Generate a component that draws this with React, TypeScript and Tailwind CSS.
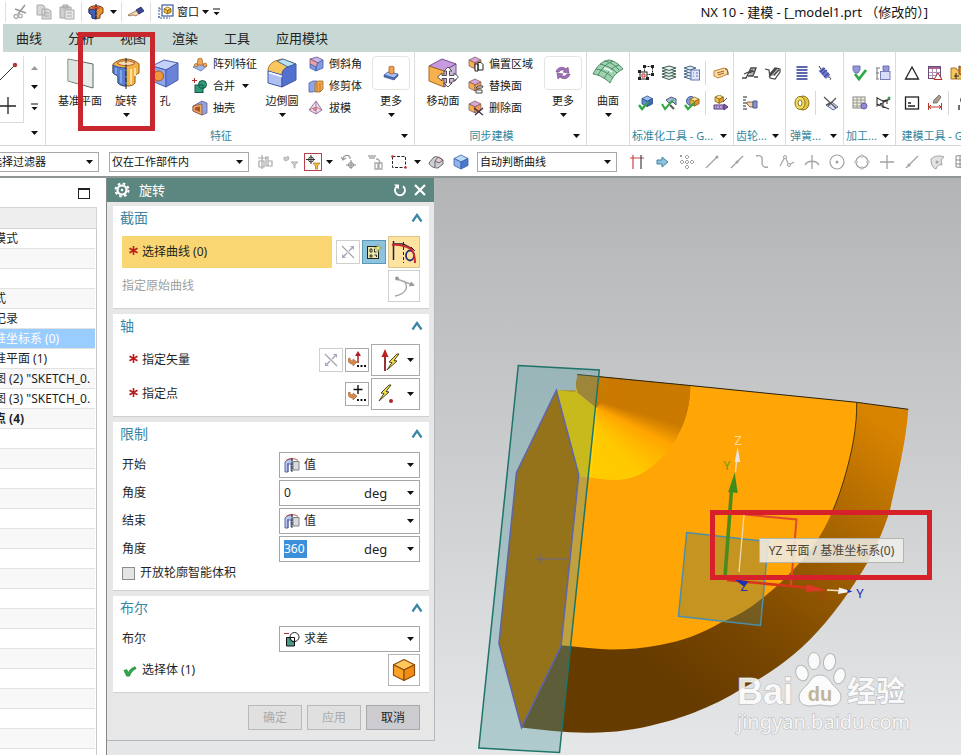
import type { ReactNode } from "react";

/* ---------- small drawing helpers ---------- */

type IconProps = { children: ReactNode; size?: string; box?: string };

function Icon({ children, size = "size-4", box = "0 0 16 16" }: IconProps) {
  return (
    <svg viewBox={box} className={`${size} shrink-0`} fill="none" aria-hidden="true">
      {children}
    </svg>
  );
}

function Caret({ className = "text-[#111]" }: { className?: string }) {
  return (
    <svg viewBox="0 0 7 4" className={`h-1 w-[7px] shrink-0 ${className}`} aria-hidden="true">
      <path d="M0 0h7L3.500 4z" fill="currentColor" />
    </svg>
  );
}

function BarCaret() {
  return (
    <svg viewBox="0 0 7 8" className="h-2 w-[7px] shrink-0" aria-hidden="true">
      <path d="M0 0.5h7v1h-7zM0.5 4h6L3.5 7.2z" fill="#111" />
    </svg>
  );
}

function Block({ top, left, right, edge, x = 1, y = 1, s = 1 }: { top: string; left: string; right: string; edge: string; x?: number; y?: number; s?: number }) {
  return (
    <g transform={`translate(${x} ${y}) scale(${s})`} stroke={edge} strokeWidth={0.8 / s} strokeLinejoin="round">
      <path d="M0 3.500L7 0l7 3.500L7 7z" fill={top} />
      <path d="M0 3.500L7 7v7L0 10.500z" fill={left} />
      <path d="M7 7l7-3.500v7L7 14z" fill={right} />
    </g>
  );
}

/* ---------- ribbon drawings ---------- */

const datumPlane = (
  <Icon size="size-8" box="0 0 32 32">
    <path d="M4 2l25 5v24L4 24z" fill="#e6ece8" stroke="#5d6b66" />
    <path d="M4 2l12 3v22L4 24z" fill="#d3dfd8" opacity=".6" />
  </Icon>
);

const revolve = (
  <Icon size="size-8" box="0 0 32 32">
    <path d="M3 7c3-3 8-5 13-5s10 2 13 5v9c-2 1-4 2-4 4v6c-2 3-5 3-9 3s-6-1-8-3v-6c0-2-3-2-5-4z" fill="#f3b244" stroke="#8d5a1e" />
    <path d="M3 8c3 2 8 3 13 3v18c-3 0-6-1-8-3v-6c0-2-3-2-5-4z" fill="#5b7fd0" stroke="#36508f" />
    <path d="M7 6c4-3 13-3 18 0-2 3-14 4-18 0z" fill="#f7d9a8" stroke="#b25f3c" />
    <path d="M21 12v15M25 11v8" stroke="#fbe0a0" strokeWidth="2" />
    <path d="M6 11v6M11 13v13" stroke="#8fb0ee" strokeWidth="1.500" />
    <path d="M16 1v31" stroke="#222" strokeDasharray="5 1.500" />
  </Icon>
);

const hole = (
  <Icon size="size-8" box="0 0 32 32">
    <path d="M3 9l12-6 14 3-12 7z" fill="#c3d2fa" stroke="#4a5fa8" />
    <path d="M3 9l14 4v17L3 24z" fill="#8ea6ee" stroke="#4a5fa8" />
    <path d="M17 13l12-7v17l-12 7z" fill="#6a83d8" stroke="#4a5fa8" />
    <circle cx="9.500" cy="19" r="5" fill="#f0963c" stroke="#a75718" />
  </Icon>
);

const edgeBlend = (
  <Icon size="size-8" box="0 0 32 32">
    <path d="M2 14c0-5 3-8 7-10l7-2 14 5-9 4c-4 1-5 4-5 8z" fill="#f7c65c" stroke="#a8742a" />
    <path d="M11 4l6-2 13 5-8 3z" fill="#b7e0f0" stroke="#4a6d9a" />
    <path d="M2 14l14 4v12L2 26z" fill="#aebff4" stroke="#3f5aa8" />
    <path d="M16 18c0-4 2-6 5-8l9-3v16l-14 7z" fill="#5470cf" stroke="#3f5aa8" />
    <path d="M3 15.500l13 4" stroke="#fff" strokeWidth="1.500" />
  </Icon>
);

const moveFace = (
  <Icon size="size-8" box="0 0 32 32">
    <path d="M2 9l13-7 14 5-12 7z" fill="#c79ae0" stroke="#74508c" />
    <path d="M2 9l15 5v16L2 24z" fill="#f8b14c" stroke="#a36a26" />
    <path d="M17 14l12-7v16l-12 7z" fill="#c9b4dc" stroke="#74508c" />
    <path d="M21 10l4 4h-2.500v4.500H27V16l4.500 4-4.500 4v-2.500h-4.500V26H25l-4 4-4-4h2.500v-4.500H15V24l-4.500-4 4.500-4v2.500h4.500V14H17z" fill="#fff" stroke="#444" strokeWidth=".9" />
  </Icon>
);

const surface = (
  <Icon size="size-8" box="0 0 32 32">
    <path d="M1 17C5 9 10 4 17 3c6 1 11 5 14 9-6 3-10 7-13 14C14 22 8 18 1 17z" fill="#9fd3b0" stroke="#4a8a66" />
    <path d="M4 12c7 1 13 5 17 9M8 7c8 2 13 5 17 9M12 4c6 1 11 4 15 9M6 18C10 11 15 6 21 4M12 22c4-8 9-12 15-14" stroke="#4a8a66" />
    <path d="M12 11c4 1 6 2 8 4" stroke="#e3f6e8" strokeWidth="2" />
  </Icon>
);

const patternFeature = (
  <Icon>
    <path d="M1 11l5-3 9 2-6 5z" fill="#9fb6ea" stroke="#5b74b8" strokeWidth=".8" />
    <path d="M6 3c1-1 4-1 4 0l1 6H5z" fill="#f3a858" stroke="#a8652a" strokeWidth=".8" />
    <path d="M2 9l2-2 2 3-2 1zM11 8l3-1 1 3-3 1z" fill="#f3a858" stroke="#a8652a" strokeWidth=".7" />
  </Icon>
);
const unite = (
  <Icon>
    <rect x="3" y="7" width="8" height="7.500" fill="#2f9a7c" stroke="#155843" />
    <circle cx="10.500" cy="6.500" r="4" fill="#2f9a7c" stroke="#155843" />
    <path d="M7 7h4v4" stroke="#155843" />
    <path d="M2.500 0v5M0 2.500h5" stroke="#b03030" />
  </Icon>
);
const shell = (
  <Icon>
    <path d="M1 6l9-5 5 2v10l-5 2-9-4z" fill="#8fa4e4" stroke="#6b5b80" strokeWidth=".8" />
    <path d="M1 6l9-2v11l-9-4z" fill="#f2a45c" stroke="#8c5a3c" strokeWidth=".8" />
    <path d="M3 7.500l5-1v5.500l-5-2z" fill="#a2542c" />
  </Icon>
);
const chamfer = (
  <Icon>
    <path d="M2 3l7-2 6 3-5 3z" fill="#c7b6e8" stroke="#5d568c" strokeWidth=".8" />
    <path d="M2 3l8 4-2 4-6-3z" fill="#e8a3a8" stroke="#8c5664" strokeWidth=".8" />
    <path d="M2 8l6 3v4l-6-3zM8 11l2-4 5-3v8l-7 3z" fill="#7f9be4" stroke="#4a5fa8" strokeWidth=".8" />
  </Icon>
);
const trimBody = (
  <Icon>
    <path d="M1 5l4-2h4v9l-4 2H1z" fill="#8da6ea" stroke="#4a5fa8" strokeWidth=".8" />
    <path d="M7 5l3-2h5v8l-3 3H7z" fill="#f3a84c" stroke="#a3652a" strokeWidth=".8" />
    <path d="M9 5v9M12 5v9" stroke="#a3652a" strokeWidth=".7" />
  </Icon>
);
const draft = (
  <Icon>
    <path d="M8 1l6 9-6 4-7-4z" fill="#eadcf0" stroke="#7c5c8c" strokeWidth=".8" />
    <path d="M8 1v13M1 10l7-3 6 3" stroke="#a86a7c" strokeWidth=".8" />
    <circle cx="7" cy="9" r="2" fill="#d77a8a" />
  </Icon>
);
const moreFeature = (
  <Icon>
    <path d="M1 10l4-3 10 2-4 4z" fill="#a9c0f0" stroke="#3f5c9c" strokeWidth=".8" />
    <path d="M1 10l10 3v2L1 12zM11 13l4-4v2l-4 4z" fill="#4a6cba" stroke="#3f5c9c" strokeWidth=".6" />
    <path d="M6 2c1-1 4-1 5 0v6c-1 1-4 1-5 0z" fill="#f3a24c" stroke="#a3622a" strokeWidth=".8" />
  </Icon>
);
const moreSync = (
  <Icon>
    <path d="M1 7c1-5 7-6 10-3l2-2 1 6-6-1 2-1C8 4 5 5 4 7zM15 9c-1 5-7 6-10 3l-2 2-1-6 6 1-2 1c2 2 5 1 6-1z" fill="#a070b8" stroke="#6d4685" strokeWidth=".6" />
  </Icon>
);
const syncBase = <Block top="#d9a6dc" left="#f8b04e" right="#f29a55" edge="#84605c" s={0.85} />;
const offsetRegion = (
  <Icon>
    {syncBase}
    <path d="M7 8h3v7H7zM10 6.500h3l2 2V14h-5z" fill="#fff" stroke="#222" />
  </Icon>
);
const replaceFace = (
  <Icon>
    {syncBase}
    <path d="M8 10l2-2h5l-1 2zM8 15v-3h6v3z" fill="#fff" stroke="#444" />
  </Icon>
);
const deleteFace = (
  <Icon>
    {syncBase}
    <path d="M6 8l9 7M15 8l-8 7" stroke="#3a2c4c" strokeWidth="1.300" />
  </Icon>
);

const stdIcons = {
  group: (
    <Icon>
      <rect x="6.500" y="1.500" width="8" height="8" stroke="#222" strokeDasharray="2 1" />
      <rect x="2" y="7" width="7" height="7" fill="#fff" stroke="#222" />
      <path d="M5 0h3v3H5zM13 0h3v3h-3zM13 8h3v3h-3zM0 5h3v3H0zM0 12h3v3H0zM8 12h3v3H8z" fill="#222" />
      <path d="M4 9h3v3H4z" stroke="#c33" fill="#fdd" />
    </Icon>
  ),
  layers: (
    <Icon>
      {[10, 7, 4, 1].map((y) => (
        <path key={y} d={`M1 ${y + 2}l7-2 7 2-7 2.500z`} fill="#e4f1ea" stroke="#3d5a50" />
      ))}
    </Icon>
  ),
  layerSet: (
    <Icon>
      {[9, 6, 3, 0].map((y) => (
        <path key={y} d={`M0 ${y + 3}l6-2 6 2-6 2z`} fill="#dfe9ee" stroke="#4a6a88" />
      ))}
      <rect x="7" y="5" width="8.500" height="10" fill="#dfe6fb" stroke="#6274b8" />
      <path d="M9 8h1M12 8h2M9 11h1M12 11h2" stroke="#6274b8" />
    </Icon>
  ),
  tag: (
    <Icon>
      <path d="M1 6l10-3 3 1 1 5-10 4-4-2z" fill="#fbdca0" stroke="#c28438" />
      <path d="M4 8l7-2M5 10l6-2" stroke="#a3622a" />
      <path d="M12 4c3 0 3 3 3 6" stroke="#555" />
    </Icon>
  ),
  blueCheck: (
    <Icon>
      <Block top="#9fc0f2" left="#5f8ad8" right="#3f68b8" edge="#2c4a88" x={4} y={1} s={0.75} />
      <path d="M1 10l3 4 6-7" stroke="#35a845" strokeWidth="2.400" />
    </Icon>
  ),
  inspect: (
    <Icon>
      <path d="M5 5l5-3 5 2v6l-3-3-4 1z" fill="#a9b8d8" stroke="#4b5a80" />
      <path d="M1 9l3 5 8-9" stroke="#35a845" strokeWidth="2" />
      <path d="M9 10l4 4" stroke="#555" strokeWidth="2" />
    </Icon>
  ),
  solidCheck: (
    <Icon>
      <circle cx="7" cy="6" r="4.500" fill="#7f9be4" stroke="#3f5c9c" />
      <Block top="#fbe08a" left="#f0b83c" right="#d8962a" edge="#8c6420" x={6} y={2} s={0.65} />
      <path d="M1 10l3 4 6-6" stroke="#35a845" strokeWidth="2.200" />
    </Icon>
  ),
  pack: (
    <Icon>
      <Block top="#fbe08a" left="#f4c648" right="#dca030" edge="#8c6420" x={2} y={0} s={0.6} />
      <path d="M1 10h10v4H1z" fill="#b9a3d8" stroke="#55397c" />
      <path d="M11 9l4 3-4 3zM3 12h1M6 12h1M9 12h1" stroke="#55397c" fill="#8c5cb0" />
      <path d="M10 7l4-4" stroke="#555" />
    </Icon>
  ),
  gearA: (
    <Icon>
      <path d="M9 4h4l-2 7H7z" fill="#b8b8b8" />
      <path d="M0 13h4l5-10h5l-3 8H6M2 9l9-4M7 8l5-2M12 12h4" stroke="#444" strokeWidth="1.300" />
    </Icon>
  ),
  gearB: (
    <Icon>
      <path d="M9 4h5l-4 7H6z" fill="#b0b0b0" />
      <path d="M0 4l4 1 1 8 5 1 5-7V4l-5-1-5 6M4 12l8-9M9 10l5-5" stroke="#444" strokeWidth="1.200" />
    </Icon>
  ),
  hand: (
    <Icon>
      <path d="M1 2h4M1 5h3M1 8h4M1 11h3M1 14h4" stroke="#222" />
      <path d="M5 7h6v5H8L5 9z" fill="#f0cfae" stroke="#8c6a4c" />
      <path d="M11 6h4v7h-4z" fill="#8a93cc" stroke="#4c5694" />
    </Icon>
  ),
  spring: (
    <Icon>
      {[2, 5, 8, 11, 14].map((y) => (
        <path key={y} d={`M2.500 ${y}h11`} stroke="#5560a8" strokeWidth="1.900" />
      ))}
    </Icon>
  ),
  springDiag: (
    <Icon>
      <path d="M4 4l7 8" stroke="#6b76cc" strokeWidth="6" />
      <path d="M3 7l5-4M5 9l5-4M7 12l5-4" stroke="#333c80" />
      <path d="M2 1l2 3M11 12c3 0 3 2 2 3" stroke="#333" />
    </Icon>
  ),
  disc: (
    <Icon>
      <ellipse cx="9" cy="8" rx="6" ry="7" fill="#e3c53c" stroke="#8a741a" />
      <ellipse cx="6" cy="8" rx="5" ry="6.500" fill="#f4dd66" stroke="#8a741a" />
      <ellipse cx="6" cy="8" rx="2" ry="3" fill="#fff" stroke="#8a741a" />
    </Icon>
  ),
  springDel: (
    <Icon>
      <path d="M3 10l6-3 6 5-5 3z" fill="#d8def0" stroke="#5c6a9c" />
      <path d="M1 2l12 11M13 3L5 11M3 10l6-3" stroke="#555" strokeWidth="1.200" />
    </Icon>
  ),
  processCheck: (
    <Icon>
      <path d="M1 1h7v4L6 8H3L1 5z" fill="#9298d8" stroke="#6a70b0" />
      <path d="M3 9l4 5 7-9" stroke="#2fa84a" strokeWidth="2.800" />
    </Icon>
  ),
  processDoc: (
    <Icon>
      <path d="M8 1h6v4l-2 2h-2L8 5z" fill="#9298d8" stroke="#6a70b0" />
      <rect x="5.500" y="6.500" width="9.500" height="8" fill="#d8dcf4" stroke="#7780b8" />
      <path d="M2 3v11M1 3h4M1 8h3M1 14h3" stroke="#777" />
    </Icon>
  ),
  tableGear: (
    <Icon>
      <rect x="1" y="2" width="12" height="11" fill="#f5f3de" stroke="#888" />
      <path d="M1 5h12M1 8h12M1 11h12M5 2v11M9 2v11" stroke="#999" />
      <circle cx="12" cy="11" r="3" fill="#8f8cd4" stroke="#6560ac" />
    </Icon>
  ),
  axisTool: (
    <Icon>
      <path d="M2 2v9l5-2M2 3l6 3v7M2 9l12 5M5 9l10-5M7 6l5-1v4" stroke="#333" strokeWidth="1.100" />
      <circle cx="14" cy="3" r="1.500" fill="#3c9a5c" />
    </Icon>
  ),
  triangle: (
    <Icon>
      <path d="M8 2l6.500 12h-13z" stroke="#222" strokeWidth="1.300" />
    </Icon>
  ),
  tableTri: (
    <Icon>
      <rect x="1.500" y="1.500" width="12" height="12" fill="#fff" stroke="#6b4a7a" />
      <path d="M2 2h11v2H2z" fill="#a86090" />
      <path d="M2 7.500h11M2 10.500h11M5.500 4v9M9.500 4v9" stroke="#a893b4" />
      <path d="M11 8l4 6.500H7z" fill="#fff" stroke="#b03030" />
    </Icon>
  ),
  folder: (
    <Icon>
      <path d="M1 3h5l1 2h8v9H1z" fill="#f6c65c" stroke="#a8742a" />
      <path d="M9 1l6 3v7l-6-2z" fill="#d88a3c" stroke="#7a4a1a" />
      <path d="M6 8v6M4 11h5" stroke="#222" />
    </Icon>
  ),
  note: (
    <Icon>
      <rect x="1.500" y="2" width="13" height="12" fill="#fff" stroke="#222" strokeWidth="1.300" />
      <path d="M4 8h3M4 11h7" stroke="#222" strokeWidth="1.300" />
    </Icon>
  ),
  dimension: (
    <Icon>
      <path d="M7 5l5-5 2 2-4 6H6z" fill="#a8a08c" stroke="#666" strokeWidth=".8" />
      <path d="M1.500 8v7M14.500 8v7M2 12h12M4 10l-2 2 2 2M12 10l2 2-2 2" stroke="#c03a2c" />
    </Icon>
  ),
  numbered: (
    <Icon>
      <circle cx="8" cy="5" r="3.500" fill="#a8acc0" stroke="#555" />
      <path d="M3 10v5M6 10h4v5H6zM13 10v5" stroke="#222" strokeWidth="1.300" />
    </Icon>
  ),
};

/* ---------- ribbon pieces ---------- */

function BigTool({ icon, label, width, menu = false }: { icon: ReactNode; label: string; width: string; menu?: boolean }) {
  return (
    <button type="button" className={`flex shrink-0 flex-col items-center pt-[5px] ${width}`}>
      {icon}
      <span className="mt-[5px] h-[14px] leading-[14px] whitespace-nowrap">{label}</span>
      {menu && <span className="mt-[5px]"><Caret /></span>}
    </button>
  );
}

function MoreTool({ icon }: { icon: ReactNode }) {
  return (
    <button type="button" className="flex w-[38px] shrink-0 flex-col items-center pt-1">
      <span className="flex h-[34px] w-full items-center justify-center rounded-sm border border-[#e4e4e4]">{icon}</span>
      <span className="mt-1 h-[14px] leading-[14px]">更多</span>
      <span className="mt-[5px]"><Caret /></span>
    </button>
  );
}

function ToolList({ items, className }: { items: { icon: ReactNode; label: string; menu?: boolean }[]; className: string }) {
  return (
    <div className={`flex shrink-0 flex-col pt-px ${className}`}>
      {items.map((it) => (
        <button key={it.label} type="button" className="flex h-[22px] items-center gap-[5px] whitespace-nowrap">
          {it.icon}
          <span>{it.label}</span>
          {it.menu && <span className="ml-0.5"><Caret /></span>}
        </button>
      ))}
    </div>
  );
}

function Group({ label, width, children, menu = true }: { label?: string; width: string; children: ReactNode; menu?: boolean }) {
  return (
    <section aria-label={label} className={`flex shrink-0 flex-col border-r border-[#dcdcdc] ${width}`}>
      <div className="flex h-[76px]">{children}</div>
      <div className="flex h-4 items-center pl-0.5 text-[#2f87a0]">
        <span className="flex-1 text-center whitespace-nowrap">{label}</span>
        {menu && <button type="button" aria-label="选项" className="flex w-5 justify-center"><Caret /></button>}
      </div>
    </section>
  );
}

function IconRows({ rows }: { rows: { name: string; icon: ReactNode; split?: boolean }[][] }) {
  return (
    <div className="flex flex-col pt-[6px] pl-1">
      {rows.map((row, i) => (
        <div key={i} className="flex h-[30px] items-center">
          {row.map((c) => (
            <div key={c.name} className="flex items-center">
              {c.split && <span className="mr-[3px] ml-0.5 h-6 w-px bg-[#d8d8d8]" />}
              <button type="button" aria-label={c.name} className="flex w-[23px] justify-center">{c.icon}</button>
            </div>
          ))}
        </div>
      ))}
    </div>
  );
}

function TitleBar() {
  const sep = "h-5 w-px bg-[#dedede]";
  return (
    <header className="flex h-6 shrink-0 items-center overflow-hidden bg-white">
      <div className="flex shrink-0 items-center pl-[5px] text-[11px]">
        <span className={sep} />
        <button type="button" aria-label="剪切" className="ml-1.5">
          <Icon><path d="M13 1L6 10M3 5l11 4" stroke="#999" strokeWidth="1.600" /><circle cx="4" cy="12.500" r="2" stroke="#aaa" strokeWidth="1.300" /><circle cx="8.500" cy="12" r="1.800" stroke="#aaa" strokeWidth="1.300" /></Icon>
        </button>
        <button type="button" aria-label="复制" className="ml-2">
          <Icon><path d="M1 1h6l2 2v8H1zM6 5h6l3 2v8H6z" fill="#d8d8d8" stroke="#aaa" /><path d="M8 9h5M8 12h5" stroke="#aaa" /></Icon>
        </button>
        <button type="button" aria-label="粘贴" className="ml-[7px]">
          <Icon><path d="M1 3h11v11H1zM4 1h5v3H4z" fill="#cfcfcf" stroke="#a6a6a6" /><path d="M6 6h9v9H6z" fill="#e6e6e6" stroke="#aaa" /><path d="M8 9h5M8 12h5" stroke="#aaa" /></Icon>
        </button>
        <span className={`${sep} ml-1.5`} />
        <button type="button" aria-label="旋转" className="ml-1.5">
          <Icon><path d="M1 4c3-3 11-3 14 0v5l-3 2v3c-2 1-6 1-8 0v-3L1 9z" fill="#e8922c" stroke="#8a3a1c" /><path d="M1 5l7 1v9l-4-1v-3L1 9z" fill="#3f62b8" stroke="#223a80" /><path d="M3 4c3-2 7-2 10 0l-5 2z" fill="#d0503c" /><path d="M8 0v16" stroke="#222" strokeDasharray="3 1" /></Icon>
        </button>
        <span className="ml-1.5"><Caret /></span>
        <span className={`${sep} ml-1`} />
        <button type="button" aria-label="触控" className="ml-1.5">
          <Icon><path d="M0 11l6-3 3-2 3 3-4 3-3-1-4 1z" fill="#f5d9b0" stroke="#8a6a48" strokeWidth=".8" /><path d="M8 6l5-3 3 4-5 3z" fill="#3f479c" stroke="#22285c" strokeWidth=".8" /></Icon>
        </button>
        <span className={`${sep} ml-1.5`} />
        <button type="button" className="ml-[7px] flex items-center gap-[3px]">
          <Icon><rect x="4" y="1" width="11" height="11" fill="#fff" stroke="#3f5c9c" strokeWidth="1.200" /><path d="M1 3v11h11M1 5h2M1 14v-3" stroke="#3f5c9c" strokeDasharray="2 1" /><Block top="#fbe08a" left="#f0c040" right="#d8a02a" edge="#8c6420" x={6} y={3} s={0.5} /></Icon>
          <span>窗口</span>
          <Caret />
        </button>
        <button type="button" aria-label="更多命令" className="ml-1"><BarCaret /></button>
      </div>
      <h1 className="ml-auto shrink-0 pr-[33px] pb-px pl-4 text-[13px] leading-5 whitespace-pre">NX 10 - 建模 - [_model1.prt （修改的）]</h1>
    </header>
  );
}

function TabBar() {
  return (
    <nav className="flex h-7 shrink-0 items-center overflow-hidden border-l-[3px] border-white bg-[#c8d8d5] pl-[13px] text-[13px] text-[#222]">
      {["曲线", "分析", "视图", "渲染", "工具", "应用模块"].map((t) => (
        <a key={t} href="#" className="mr-[26px] shrink-0 leading-5 whitespace-nowrap">{t}</a>
      ))}
    </nav>
  );
}

function Ribbon() {
  const s = stdIcons;
  return (
    <div className="flex h-[94px] shrink-0 overflow-hidden border-b border-[#d6d6d6] bg-white text-[11px] text-[#1a1a1a]">
      <section aria-label="曲线库" className="mt-1 flex w-[46px] shrink-0 border-r border-[#dcdcdc]">
        <div className="h-[67px] w-6 border-r border-b border-[#dcdcdc]">
          <svg viewBox="0 0 23 66" className="h-[66px] w-[23px]" fill="none" aria-hidden="true">
            <path d="M0 24L15 9" stroke="#333" />
            <circle cx="15" cy="9" r="2.200" fill="#b03838" />
            <path d="M8 41v17M0 50h16" stroke="#222" strokeWidth="1.300" />
          </svg>
        </div>
        <div className="flex w-5 flex-col items-center pt-[10px]">
          <span className="rotate-180"><Caret className="text-[#999]" /></span>
          <span className="mt-[15px]"><Caret /></span>
          <span className="mt-[14px]"><BarCaret /></span>
          <span className="mt-5"><Caret /></span>
        </div>
      </section>

      <Group label="特征" width="w-[369px]">
        <div className="flex pl-2">
          <BigTool icon={datumPlane} label="基准平面" width="w-[52px]" />
          <BigTool icon={revolve} label="旋转" width="w-10" menu />
          <BigTool icon={hole} label="孔" width="w-[38px]" />
          <ToolList className="w-20 pl-2" items={[{ icon: patternFeature, label: "阵列特征" }, { icon: unite, label: "合并", menu: true }, { icon: shell, label: "抽壳" }]} />
          <BigTool icon={edgeBlend} label="边倒圆" width="w-9" menu />
          <ToolList className="w-[72px] pl-2" items={[{ icon: chamfer, label: "倒斜角" }, { icon: trimBody, label: "修剪体" }, { icon: draft, label: "拔模" }]} />
          <MoreTool icon={moreFeature} />
        </div>
      </Group>

      <Group label="同步建模" width="w-[172px]">
        <div className="flex pl-2.5">
          <BigTool icon={moveFace} label="移动面" width="w-9" />
          <ToolList className="w-[83px] pl-[7px]" items={[{ icon: offsetRegion, label: "偏置区域" }, { icon: replaceFace, label: "替换面" }, { icon: deleteFace, label: "删除面" }]} />
          <MoreTool icon={moreSync} />
        </div>
      </Group>

      <Group width="w-[43px]" menu={false}>
        <BigTool icon={surface} label="曲面" width="w-[42px]" menu />
      </Group>

      <Group label="标准化工具 - G..." width="w-[104px]">
        <IconRows rows={[
          [{ name: "编组", icon: s.group }, { name: "图层", icon: s.layers }, { name: "图层设置", icon: s.layerSet }, { name: "属性", icon: s.tag, split: true }],
          [{ name: "检查", icon: s.blueCheck }, { name: "审查", icon: s.inspect }, { name: "实体检查", icon: s.solidCheck }, { name: "打包", icon: s.pack, split: true }],
        ]} />
      </Group>
      <Group label="齿轮..." width="w-[52px]">
        <IconRows rows={[[{ name: "圆柱齿轮", icon: s.gearA }, { name: "锥齿轮", icon: s.gearB }], [{ name: "齿轮编辑", icon: s.hand }]]} />
      </Group>
      <Group label="弹簧..." width="w-[58px]">
        <IconRows rows={[[{ name: "压缩弹簧", icon: s.spring }, { name: "拉伸弹簧", icon: s.springDiag }], [{ name: "碟簧", icon: s.disc }, { name: "删除弹簧", icon: s.springDel, split: true }]]} />
      </Group>
      <Group label="加工..." width="w-[52px]">
        <IconRows rows={[[{ name: "加工检查", icon: s.processCheck }, { name: "加工文档", icon: s.processDoc }], [{ name: "加工表", icon: s.tableGear }, { name: "加工坐标", icon: s.axisTool }]]} />
      </Group>
      <Group label="建模工具 - G..." width="w-[100px]">
        <IconRows rows={[
          [{ name: "三角", icon: s.triangle }, { name: "表格", icon: s.tableTri }, { name: "部件", icon: s.folder }],
          [{ name: "注释", icon: s.note }, { name: "尺寸", icon: s.dimension }, { name: "编号", icon: s.numbered, split: true }],
        ]} />
      </Group>
    </div>
  );
}

function BarSelect({ label, value, className }: { label: string; value: string; className: string }) {
  return (
    <div className={`relative flex shrink-0 items-center ${className}`}>
      <select aria-label={label} className="h-5 w-full appearance-none border border-[#a8a8a8] bg-white pr-5 pl-0.5 text-[11px] leading-4">
        <option>{value}</option>
      </select>
      <span className="pointer-events-none absolute right-1.5 flex"><Caret /></span>
    </div>
  );
}

const g = "#a2a2a2";
const snapIcons: { name: string; d: ReactNode }[] = [
  { name: "相交处停止", d: <><path d="M4 1v14M1 4h14" stroke="#c44" strokeWidth="1.200" /><path d="M12 1v14" stroke="#444" strokeWidth="1.200" /></> },
  { name: "跟随圆角", d: <path d="M3 6h5V3l6 5-6 5v-3H3z" fill="#8fc4dc" stroke="#3f84a4" /> },
  { name: "端点捕捉", d: <path d="M8 1l2 2-2 2-2-2zM13 6l2 2-2 2-2-2zM8 11l2 2-2 2-2-2zM3 6l2 2-2 2-2-2zM8 6l2 2-2 2-2-2zM1 1l2 2M1 3l2-2" stroke={g} /> },
  { name: "端点", d: <><path d="M2 14L13 3" stroke={g} strokeWidth="1.200" /><circle cx="13" cy="3" r="1.500" fill={g} /></> },
  { name: "中点", d: <><path d="M2 14L14 2" stroke={g} strokeWidth="1.200" /><circle cx="8" cy="8" r="1.500" fill={g} /></> },
  { name: "控制点", d: <path d="M2 2c8-2 6 4 6 7s2 5 6 4" stroke={g} strokeWidth="1.300" /> },
  { name: "极点", d: <><path d="M1 12l5-9 4 8 5-3" stroke={g} strokeWidth="1.200" /><circle cx="6" cy="3" r="1.500" fill="#fff" stroke={g} /><circle cx="10" cy="11" r="1.500" fill="#fff" stroke={g} /></> },
  { name: "交点", d: <path d="M8 1v14M1 11c3-5 11-5 14 0" stroke={g} strokeWidth="1.300" /> },
  { name: "圆弧中心", d: <><circle cx="8" cy="8" r="7" stroke={g} strokeWidth="1.200" /><circle cx="8" cy="8" r="1.500" fill={g} /></> },
  { name: "象限点", d: <><circle cx="8" cy="8" r="6" stroke={g} strokeWidth="1.200" /><path d="M8 0.500l1.500 1.500L8 3.500 6.500 2zM14 6.500L15.500 8 14 9.500 12.500 8zM8 12.500L9.500 14 8 15.500 6.500 14zM2 6.500L3.500 8 2 9.500 0.500 8z" fill="#fff" stroke={g} /></> },
  { name: "现有点", d: <path d="M8 1v14M1 8h14" stroke={g} strokeWidth="1.300" /> },
  { name: "曲线上的点", d: <><path d="M2 14L14 2" stroke={g} strokeWidth="1.200" /><circle cx="5" cy="11" r="1.500" fill={g} /></> },
  { name: "面上的点", d: <><path d="M2 5c3-3 8-4 13-2l-3 3 1 5c-3-1-5 1-6 4-3-1-5-4-5-10z" fill="#e2e2e2" stroke={g} /><circle cx="8" cy="8" r="1.500" fill={g} /></> },
  { name: "有界栅格", d: <path d="M2 2l12-1v13l-12-1zM6 2v11M10 2v12M2 6h12M2 10h12" stroke="#8a8a8a" /> },
];

function SelectionBar() {
  return (
    <div className="flex h-8 shrink-0 items-center overflow-hidden border-b-2 border-[#8f9694] bg-white pt-0.5">
      <BarSelect label="类型过滤器" value="选择过滤器" className="-ml-3 w-[111px]" />
      <BarSelect label="选择范围" value="仅在工作部件内" className="ml-2.5 w-[140px]" />
      <div className="ml-[3px] flex shrink-0 items-center">
        <button type="button" aria-label="选择组件" className="flex w-[26px] justify-center"><Icon><path d="M5 1v14M1 4h8M2 7h5v6H2zM9 3h2v9H9zM11 7h4v5h-4z" stroke="#a8a8a8" strokeWidth="1.200" /></Icon></button>
        <button type="button" aria-label="过滤" className="flex w-[26px] justify-center"><Icon><path d="M1 3l2 1 2-2 1 3-3 2-2-1zM8 8h7l-3 3v3h-1v-3z" fill="#ccc" stroke="#b5b5b5" /></Icon></button>
        <button type="button" aria-label="点过滤" className="flex size-[18px] items-center justify-center border border-[#b8404a]"><Icon><path d="M6 1v9M1 5.500h9" stroke="#333" /><circle cx="6" cy="5.500" r="2.500" stroke="#333" /><path d="M8 9h7l-2.500 3v3h-2v-3z" fill="#f4b83c" stroke="#a8742a" strokeWidth=".7" /></Icon></button>
        <span className="flex w-3.5 justify-center"><Caret /></span>
        <button type="button" aria-label="重置" className="flex w-[26px] justify-center"><Icon><path d="M2 6c0-6 8-6 7-1M0 3l2 3 3-2" stroke="#999" strokeWidth="1.200" /><path d="M10 6v9M5 11h10" stroke="#888" /><circle cx="10" cy="11" r="2.500" stroke="#888" /></Icon></button>
        <button type="button" aria-label="组件" className="flex w-[26px] justify-center"><Icon><path d="M1 2h8M2 4h6M9 5c4 0 4 3 4 5M8 9h3v6H8zM12 9h3v6h-3z" stroke="#aaa" strokeWidth="1.300" /></Icon></button>
        <button type="button" aria-label="矩形选择" className="flex w-[22px] justify-center"><Icon><rect x="1.500" y="2.500" width="13" height="11" stroke="#222" strokeDasharray="3 1.500" /><circle cx="1.500" cy="2.500" r="1.300" fill="#c33" /><circle cx="14.500" cy="13.500" r="1.300" fill="#c33" /></Icon></button>
        <span className="flex w-3.5 justify-center"><Caret /></span>
        <button type="button" aria-label="面高亮" className="flex w-6 justify-center"><Icon><path d="M1 9l5-6c3-1 7 1 9 3v4l-5 4c-3 0-8-1-9-5z" fill="#cfd0d6" stroke="#666" /><path d="M7 7l3-4 5 3-4 3zM7 7v6" stroke="#666" fill="#e8c8c8" /></Icon></button>
        <button type="button" aria-label="着色" className="flex w-[26px] justify-center"><Icon><Block top="#b8dcf6" left="#8fb4ec" right="#4a78cc" edge="#3a5fa8" /></Icon></button>
      </div>
      <BarSelect label="曲线规则" value="自动判断曲线" className="ml-[3px] w-[140px]" />
      <div className="ml-[7px] flex items-center">
        {snapIcons.map((it) => (
          <button key={it.name} type="button" aria-label={it.name} className="flex w-[25px] shrink-0 justify-center"><Icon>{it.d}</Icon></button>
        ))}
      </div>
    </div>
  );
}

/* ---------- part navigator ---------- */

const treeRows = [
  "模式", "", "", "式", "记录", "准坐标系 (0)", "准平面 (1)", '图 (2) "SKETCH_0.', '图 (3) "SKETCH_0.', "点 (4)",
  ...Array.from({ length: 17 }, () => ""),
];

function Navigator() {
  return (
    <aside aria-label="部件导航器" className="flex w-[106px] shrink-0 flex-col overflow-hidden bg-white">
      <div className="flex h-[29px] shrink-0 items-center justify-end pt-0.5 pr-4">
        <button type="button" aria-label="最大化" className="h-[11px] w-3 border border-t-2 border-[#222]" />
      </div>
      <div className="h-[22px] w-[97px] shrink-0 border border-l-0 border-[#d4d4d4] bg-[#eeeeee]" />
      <ul className="w-[97px] border-r border-[#c9c9c9] text-[12px] text-[#1f1f1f]">
        {treeRows.map((row, i) => (
          <li
            key={i}
            className={`mr-px flex h-5 items-center border-b border-[#e2e2e2] ${i === 5 ? "bg-[#99ccff] text-white" : i % 2 ? "bg-[#f8f8f8]" : "bg-white"} ${i === 9 ? "font-bold" : ""}`}
          >
            <span className="-ml-1.5 leading-[18px] whitespace-pre">{row}</span>
          </li>
        ))}
      </ul>
    </aside>
  );
}

/* ---------- revolve dialog ---------- */

function Section({ title, children, pb }: { title: string; children: ReactNode; pb: string }) {
  return (
    <section className={`border-b border-[#cfcfcf] bg-white px-[9px] ${pb}`}>
      <div className="-ml-0.5 flex h-6 items-center justify-between">
        <h3 className="text-[14px] leading-6 text-[#3a86a4]">{title}</h3>
        <button type="button" aria-label={`折叠${title}`} className="-mr-1 px-px">
          <svg viewBox="0 0 12 10" className="h-2.5 w-3" fill="none" aria-hidden="true">
            <path d="M1.500 8.500L6 2l4.500 6.500" stroke="#3a86a4" strokeWidth="2.200" />
          </svg>
        </button>
      </div>
      <div className="flex flex-col gap-0.5 pt-1.5">{children}</div>
    </section>
  );
}

function Star() {
  return (
    <svg viewBox="0 0 9 9" className="-mt-1 size-[9px] shrink-0" aria-hidden="true">
      <path d="M4.500 0v9M0.500 2.200l8 4.600M8.500 2.200l-8 4.600" stroke="#b81c1c" strokeWidth="1.600" />
    </svg>
  );
}

function SmallButton({ label, children, tone = "border-[#a9a9a9] bg-white" }: { label: string; children: ReactNode; tone?: string }) {
  return <button type="button" aria-label={label} className={`flex size-6 shrink-0 items-center justify-center border ${tone}`}>{children}</button>;
}

function BigButton({ label, children, tone = "border-[#b4b4b4] bg-white" }: { label: string; children: ReactNode; tone?: string }) {
  return <button type="button" aria-label={label} className={`flex size-8 shrink-0 items-center justify-center border ${tone}`}>{children}</button>;
}

function DropButton({ label, children }: { label: string; children: ReactNode }) {
  return (
    <button type="button" aria-label={label} className="flex h-8 w-[49px] shrink-0 items-center justify-between border border-[#a9a9a9] bg-white pr-[5px] pl-1.5">
      {children}
      <Caret />
    </button>
  );
}

const reverseIcon = (
  <Icon><path d="M2 2l12 12" stroke="#a5a5a5" strokeWidth="1.200" /><path d="M9 7l3-3M7 9l-3 3" stroke="#a3a9ba" strokeWidth="1.500" /><path d="M10 2h4v4zM2 10v4h4z" fill="#a3a9ba" /></Icon>
);
const orangeHook = (
  <>
    <path d="M0 8c0 4 2 5 5 5v2l4-4-4-3v2c-2 0-3-1-3-3z" fill="#d98a4a" stroke="#9c5a28" strokeWidth=".6" />
    <path d="M9 15h2M12.500 15h2M16 15h2" stroke="#111" strokeWidth="2" />
  </>
);
const bolt = "M15 3l-8 8 3 .5L5 19l10-9-3-.5L17 3z";

function ValueSelect({ id, value, icon }: { id: string; value: string; icon: ReactNode }) {
  return (
    <div className="relative flex h-[26px] w-[141px] shrink-0 items-center">
      <select id={id} className="h-full w-full appearance-none border border-[#a6a6a6] bg-white pr-6 pl-6 text-[12px] leading-5">
        <option>{value}</option>
      </select>
      <span className="pointer-events-none absolute left-[5px] flex">{icon}</span>
      <span className="pointer-events-none absolute right-1.5 flex"><Caret /></span>
    </div>
  );
}

function AngleField({ id, value, selected = false }: { id: string; value: string; selected?: boolean }) {
  return (
    <div className="flex h-[26px] w-[141px] shrink-0 items-center border border-[#a6a6a6] bg-white pr-[5px] pl-1">
      <input id={id} defaultValue={value} className={`h-[18px] w-[23px] p-0 text-[12px] leading-[18px] outline-none ${selected ? "bg-[#3c8fd9] text-white" : "bg-white"}`} />
      <span className="mr-auto ml-[57px] text-[13px] leading-5">deg</span>
      <button type="button" aria-label="选项" className="flex"><Caret /></button>
    </div>
  );
}

const limitIcon = (
  <Icon>
    <path d="M1 5c1-2 4-3 7-3v11l-1 1V7H4v8H1z" fill="#b8c8ec" stroke="#4a5f98" strokeWidth=".9" />
    <path d="M4 15V6" stroke="#4a5f98" strokeWidth=".9" />
    <path d="M2 3.500c3-2.500 9-2.500 12 0" stroke="#b04a4a" />
    <path d="M9 4.500h6V13H9z" fill="#d8dae0" stroke="#777" strokeWidth=".9" />
    <path d="M8 1v14" stroke="#333" strokeDasharray="3 1" />
  </Icon>
);
const subtractIcon = (
  <Icon>
    <circle cx="10.500" cy="6" r="4.500" fill="#fff" stroke="#222" />
    <path d="M2.500 6.500h3.500c0 3 2 4.500 4.500 4.500v4h-8z" fill="#4a9a86" stroke="#111" />
    <path d="M6 6.500h4.500V11" stroke="#111" />
    <path d="M0 2.500h5" stroke="#b03030" />
  </Icon>
);

function RevolveDialog() {
  return (
    <form aria-label="旋转" className="w-[328px] shrink-0 self-start border-r border-b border-[#b4b8bc] bg-[#e7e7e7] text-[12px] text-[#1f1f1f]">
      <div className="flex h-6 items-center bg-[#5b8780] px-[7px] text-white">
        <Icon>
          <circle cx="8" cy="8" r="4.500" stroke="#fff" strokeWidth="2.200" />
          <circle cx="8" cy="8" r="6.500" stroke="#fff" strokeWidth="2" strokeDasharray="2.600 2.500" />
          <circle cx="8" cy="8" r="1.200" fill="#fff" />
        </Icon>
        <h2 className="ml-[9px] text-[13px] leading-6">旋转</h2>
        <button type="button" aria-label="重置" className="ml-auto"><Icon size="size-3.5" box="0 0 14 14"><path d="M4 3.200a5 5 0 1 0 6 0" stroke="#fff" strokeWidth="1.900" /><path d="M1 1.500h5v5z" fill="#fff" /></Icon></button>
        <button type="button" aria-label="关闭" className="ml-1.5"><Icon size="size-3.5" box="0 0 14 14"><path d="M2 2l10 10M12 2L2 12" stroke="#fff" strokeWidth="2.200" /></Icon></button>
      </div>

      <div className="flex flex-col gap-[5px] pt-1 pr-[5px] pl-1.5">
        <Section title="截面" pb="pb-1.5">
          <div className="flex h-8 items-center gap-0.5">
            <span className="mr-0.5 flex h-8 flex-1 items-center gap-1 bg-[#fad673] pl-[7px]"><Star /><span>选择曲线 (0)</span></span>
            <SmallButton label="反向" tone="border-[#cfcfcf] bg-white">{reverseIcon}</SmallButton>
            <SmallButton label="绘制截面" tone="border-[#5b98b8] bg-[#8cc4de]">
              <Icon><rect x="1.500" y="2.500" width="11" height="12" fill="#eee8a8" stroke="#222" /><path d="M4 5h2v3H4zM4 11h2v2H4zM8.500 5v3h2M8.500 11h2v2" stroke="#333" /><path d="M12 0l1 3 3 1-3 1-1 3-1-3-3-1 3-1z" fill="#e8f050" stroke="#777" strokeWidth=".4" /></Icon>
            </SmallButton>
            <BigButton label="曲线" tone="border-[#dcc58c] bg-[#fde2a0]">
              <Icon size="size-7" box="0 0 28 28"><path d="M3.500 3v19" stroke="#1f1f4c" strokeWidth="1.500" /><path d="M3 6h10l10 5" stroke="#1f1f4c" strokeWidth="1.300" /><path d="M13.500 4v21" stroke="#222" strokeDasharray="3 2" /><ellipse cx="20" cy="17.500" rx="4" ry="5" stroke="#2a2a70" strokeWidth="1.800" /><path d="M2 7c7-1 17 2 20 5 2 3 3 8 3 13" stroke="#cc2a2a" strokeWidth="2" /><path d="M21 9l4 4" stroke="#1f1f4c" /></Icon>
            </BigButton>
          </div>
          <div className="flex h-8 items-center justify-between text-[#a0a0a0]">
            <span>指定原始曲线</span>
            <BigButton label="指定原始曲线" tone="border-[#cfcfcf] bg-white">
              <Icon size="size-6" box="0 0 24 24"><path d="M5 5l16 6M3 22c11-2 14-9 9-15" stroke="#aaa" strokeWidth="1.500" /><circle cx="5" cy="4.500" r="2" fill="#999" /><path d="M23 11.500l-6 1 2-5z" fill="#999" /></Icon>
            </BigButton>
          </div>
        </Section>

        <Section title="轴" pb="pb-1.5">
          <div className="flex h-8 items-center gap-0.5">
            <span className="flex flex-1 items-center gap-1 pl-[7px]"><Star /><span>指定矢量</span></span>
            <SmallButton label="反向" tone="border-[#cfcfcf] bg-white">{reverseIcon}</SmallButton>
            <SmallButton label="矢量对话框"><Icon size="size-[18px]" box="0 0 18 18">{orangeHook}<path d="M10 12V4" stroke="#b02020" strokeWidth="1.500" /><path d="M10 0l3 5H7z" fill="#b02020" /></Icon></SmallButton>
            <DropButton label="自动判断的矢量"><Icon size="size-6" box="0 0 24 24"><path d="M7 23V8" stroke="#8a1c1c" strokeWidth="1.800" /><path d="M7 1l3.500 8h-7z" fill="#c02020" /><path d={bolt} transform="translate(4 3)" fill="#f3e04a" stroke="#4a4420" /></Icon></DropButton>
          </div>
          <div className="flex h-8 items-center gap-0.5">
            <span className="flex flex-1 items-center gap-1 pl-[7px]"><Star /><span>指定点</span></span>
            <SmallButton label="点对话框"><Icon size="size-[18px]" box="0 0 18 18">{orangeHook}<path d="M10 0v9M5.500 4.500h9" stroke="#111" strokeWidth="1.400" /></Icon></SmallButton>
            <DropButton label="自动判断的点"><Icon size="size-6" box="0 0 24 24"><path d={bolt} transform="translate(-4 0)" fill="#f3e04a" stroke="#4a4420" /><circle cx="13" cy="19" r="2" fill="#b02828" /></Icon></DropButton>
          </div>
        </Section>

        <Section title="限制" pb="pb-2">
          <div className="flex items-center justify-between"><label htmlFor="start">开始</label><ValueSelect id="start" value="值" icon={limitIcon} /></div>
          <div className="flex items-center justify-between"><label htmlFor="a0">角度</label><AngleField id="a0" value="0" /></div>
          <div className="flex items-center justify-between"><label htmlFor="end">结束</label><ValueSelect id="end" value="值" icon={limitIcon} /></div>
          <div className="flex items-center justify-between"><label htmlFor="a1">角度</label><AngleField id="a1" value="360" selected /></div>
          <label className="flex h-[18px] items-center gap-[5px]">
            <input type="checkbox" className="size-[13px] appearance-none border border-[#8c8c8c] bg-[#e4e4e4]" />
            <span>开放轮廓智能体积</span>
          </label>
        </Section>

        <Section title="布尔" pb="pb-1.5">
          <div className="flex items-center justify-between"><label htmlFor="bool">布尔</label><ValueSelect id="bool" value="求差" icon={subtractIcon} /></div>
          <div className="flex h-8 items-center">
            <Icon size="size-[15px]"><path d="M2 8l3-1 2 3c2-4 4-5 7-6l1 2c-4 2-6 5-7 8H5z" fill="#2fa84a" stroke="#1f7a34" strokeWidth=".6" /></Icon>
            <span className="ml-[5px] flex-1">选择体 (1)</span>
            <BigButton label="选择体">
              <Icon size="size-6" box="0 0 16 16"><Block top="#ffc85a" left="#fba324" right="#f08c14" edge="#8c4c10" /></Icon>
            </BigButton>
          </div>
        </Section>
      </div>

      <div className="flex justify-end gap-[5px] pt-3 pr-3.5 pb-2.5">
        <button type="button" disabled className="h-[25px] w-[54px] border border-[#b9b9b9] bg-[#e0e0e0] text-[#aaaaaa]">确定</button>
        <button type="button" disabled className="h-[25px] w-[54px] border border-[#b9b9b9] bg-[#e0e0e0] text-[#aaaaaa]">应用</button>
        <button type="button" className="h-[25px] w-[54px] border border-[#a9a9ad] bg-[#cbcbd0]">取消</button>
      </div>
    </form>
  );
}

/* ---------- 3D view ---------- */

type Rgb = [number, number, number];
const coneStops: [number, Rgb][] = [
  [-60, [201, 120, 0]],
  [17, [203, 122, 0]],
  [21, [222, 138, 0]],
  [27, [255, 165, 0]],
  [36, [255, 184, 0]],
  [48, [255, 202, 0]],
  [80, [255, 205, 0]],
];

function shade(angle: number) {
  for (let i = 1; i < coneStops.length; i++) {
    const [a1, c1] = coneStops[i];
    const [a0, c0] = coneStops[i - 1];
    if (angle <= a1) {
      const t = (angle - a0) / (a1 - a0);
      return `rgb(${c0.map((v, k) => Math.round(v + (c1[k] - v) * t)).join(",")})`;
    }
  }
  return "rgb(255,205,0)";
}

function ConeShading() {
  const cx = 560;
  const cy = 390;
  const at = (deg: number) => {
    const r = (deg * Math.PI) / 180;
    return `${(cx + 180 * Math.cos(r)).toFixed(1)} ${(cy + 180 * Math.sin(r)).toFixed(1)}`;
  };
  return (
    <g>
      {Array.from({ length: 150 }, (_, i) => i - 45).map((a) => (
        <path key={a} d={`M${cx} ${cy}L${at(a - 1)}L${at(a + 1)}z`} fill={shade(a)} stroke={shade(a)} strokeWidth="1" />
      ))}
    </g>
  );
}

const planePts = "518.3,365.5 599.3,370 559.5,752.5 478.8,748";
const hexPts = "556.3,390.500 578.7,474.500 561,646 521.500,727.500 499,643.500 516.500,472.700";
const bodyOutline =
  "M577.3 374.500L690 385.500 856.700 402.300 908.300 409.300C906 440 900 466 890 510C884 530 872 558 856.700 580C836 612 815 637 793 655C776 669 760 679 743 688C727 698 711 706 693 713C684 716 674 720 660 723.300C636 730 612 733 586.700 732.700C564 732.500 542 730 521 727.500L561 645L579 476L556.300 390.500H576z";

function Scene() {
  return (
    <svg viewBox="435 178 526 577" className="h-[577px] w-[526px] shrink-0" fill="none" role="img" aria-label="三维模型视图">
      <defs>
        <linearGradient id="side" gradientUnits="userSpaceOnUse" x1="690" y1="700" x2="905" y2="440">
          <stop offset="0" stopColor="#663b00" />
          <stop offset="0.250" stopColor="#774600" />
          <stop offset="0.500" stopColor="#915600" />
          <stop offset="0.750" stopColor="#b36c00" />
          <stop offset="1" stopColor="#d98400" />
        </linearGradient>
        <clipPath id="groove">
          <path d="M577.300 374.500L576 392L556.300 390.500L579 476C588 476 596 479 610 479.500C626 480.500 638 477 650 468C660 460 667 453 672 445C686 424 690 405 690.300 385.500z" />
        </clipPath>
      </defs>

      <path d={bodyOutline} fill="url(#side)" />
      <path
        d="M577.300 374.500L856.700 402.300C857 425 853 447 846.700 470C843 484 838 499 831.700 513.300C822 535 810 553 793 570C783 581 772 591 760 600C748 610 735 617 720 623C701 634 682 641 660 645C644 648 628 649.500 610 649.500C593 649 578 647 561 645.300L579 476L556.300 390.500H576z"
        fill="#ffa506"
      />
      <g clipPath="url(#groove)">
        <ConeShading />
        <path d="M556 388h20l21 19.500-6 75h-14z" fill="#ffd500" />
        <path d="M577.300 373v19.500l19 15.500 12-15v-20z" fill="#c97a00" />
      </g>
      <path d="M577.300 374.500L690 385.500 856.700 402.300 908.300 409.300" stroke="#2b2410" />
      <path d="M856.700 402.300C857 425 853 447 846.700 470C843 484 838 499 831.700 513.300" stroke="#3a2a08" strokeWidth=".9" />

      <polygon points={planePts} fill="#4f9aa0" fillOpacity=".36" />
      <polygon points="556,390.500 576,391.500 594,407 588,476 579,475" fill="#d0b400" fillOpacity=".5" />
      <polygon points={hexPts} fill="#94731a" stroke="#6066a8" strokeWidth="1.600" />
      <polygon points={planePts} stroke="#1f7468" strokeWidth="1.500" />
      <path d="M540 554v10M535 559h10M545 559h23" stroke="#6a6690" />

      {/* datum coordinate system */}
      <polygon points="686.700,532.500 768.300,541.700 760.500,625.500 678.500,616.300" fill="#6a7850" fillOpacity=".38" stroke="#4a90ac" strokeWidth="1.500" />
      <path d="M745 514.500L796.500 519.500 791 585" stroke="#e0492c" strokeWidth="2" />
      <path d="M744 515L739 572" stroke="#f0d8b0" strokeWidth="1.300" />
      <path d="M725 577L731.500 490" stroke="#4a8c1c" strokeWidth="3.600" />
      <path d="M734.700 472.500l3 20.500-9.500-1z" fill="#3f8c1c" />
      <path d="M735.500 472L737 456" stroke="#f5e2c4" strokeWidth="1.300" />
      <path d="M737.700 447l2.500 15h-5.500z" fill="#e4e4e0" />
      <path d="M727 580L810 588" stroke="#d8341c" strokeWidth="2.600" />
      <path d="M827 590.500l-20-6.500-1.500 8z" fill="#d83a24" />
      <path d="M827 590L845 591" stroke="#eee0c8" strokeWidth="1.500" />
      <path d="M852 591.500l-13-4-1 6.500z" fill="#f2f2f2" />
      <path d="M852.500 591.500l-5-2v3.500z" fill="#2030b0" />
      <path d="M736 580l12 2-4 4z" fill="#1c2cb4" stroke="#1c2cb4" />
      <g fontFamily="Noto Sans, sans-serif" textAnchor="middle">
        <text x="738" y="445" fontSize="13" fill="#ffdca0">Z</text>
        <text x="727" y="470" fontSize="12" fill="#6b9a1c">Y</text>
        <text x="744" y="591" fontSize="13" fill="#2438a8">Z</text>
        <text x="823" y="601" fontSize="11" fill="#a8421c">X</text>
        <text x="860" y="598" fontSize="13" fill="#2028b8">Y</text>
      </g>

      {/* site watermark */}
      <g fill="#ffffff" fillOpacity=".85" stroke="#b4b6b8" strokeWidth="1">
        <g fontWeight="700" paintOrder="stroke">
          <text x="737" y="704" fontSize="36" fontFamily="Liberation Sans, sans-serif">Bai</text>
          <text x="847" y="702" fontSize="29" fontFamily="Noto Sans CJK SC, sans-serif">经验</text>
          <text x="737" y="729" fontSize="20" fontWeight="400" fontFamily="Noto Sans, sans-serif">jingyan.baidu.com</text>
        </g>
        <ellipse cx="802" cy="673" rx="6" ry="8" transform="rotate(-20 802 673)" />
        <ellipse cx="814" cy="661" rx="6" ry="8.500" />
        <ellipse cx="829.500" cy="662" rx="6" ry="8.500" transform="rotate(10 829.500 662)" />
        <ellipse cx="839.500" cy="676" rx="5.500" ry="8" transform="rotate(20 839.500 676)" />
        <path d="M820 675c7 0 9 5 13 10 4 4 8 7 8 12 0 6-5 9-11 9-4 0-7-1-10-1s-6 1-10 1c-6 0-11-3-11-9 0-5 4-8 8-12 4-5 6-10 13-10z" />
      </g>
      <text x="820" y="701" fontSize="20" fontWeight="700" textAnchor="middle" fontFamily="Liberation Sans, sans-serif" fill="#c2b49a">du</text>
    </svg>
  );
}

export default function App() {
  return (
    <div className="relative flex h-screen flex-col overflow-hidden bg-white font-['Noto_Sans','Noto_Sans_CJK_SC',sans-serif] text-[#111]">
      <TitleBar />
      <TabBar />
      <Ribbon />
      <SelectionBar />
      <main className="flex min-h-0 flex-1">
        <Navigator />
        <div className="relative flex min-w-0 flex-1 overflow-hidden border-l border-[#85898a] bg-linear-to-b from-[#b3b4b6] to-[#e6e7e9]">
          <RevolveDialog />
          <Scene />
          <div role="tooltip" className="absolute top-[360px] left-[652px] h-[25px] w-[145px] border border-[#b5b5b0] bg-[#efefeb]/85 text-center text-[12px] leading-[23px] whitespace-nowrap text-[#4c463c]">
            YZ 平面 / 基准坐标系(0)
          </div>
          <div className="absolute top-[332px] left-[603px] h-[70px] w-[222px] border-[5px] border-[#d6202a]" />
        </div>
      </main>
      <div className="pointer-events-none absolute top-8 left-[78px] h-[99px] w-[77px] border-[5px] border-[#c8272e]" />
    </div>
  );
}
